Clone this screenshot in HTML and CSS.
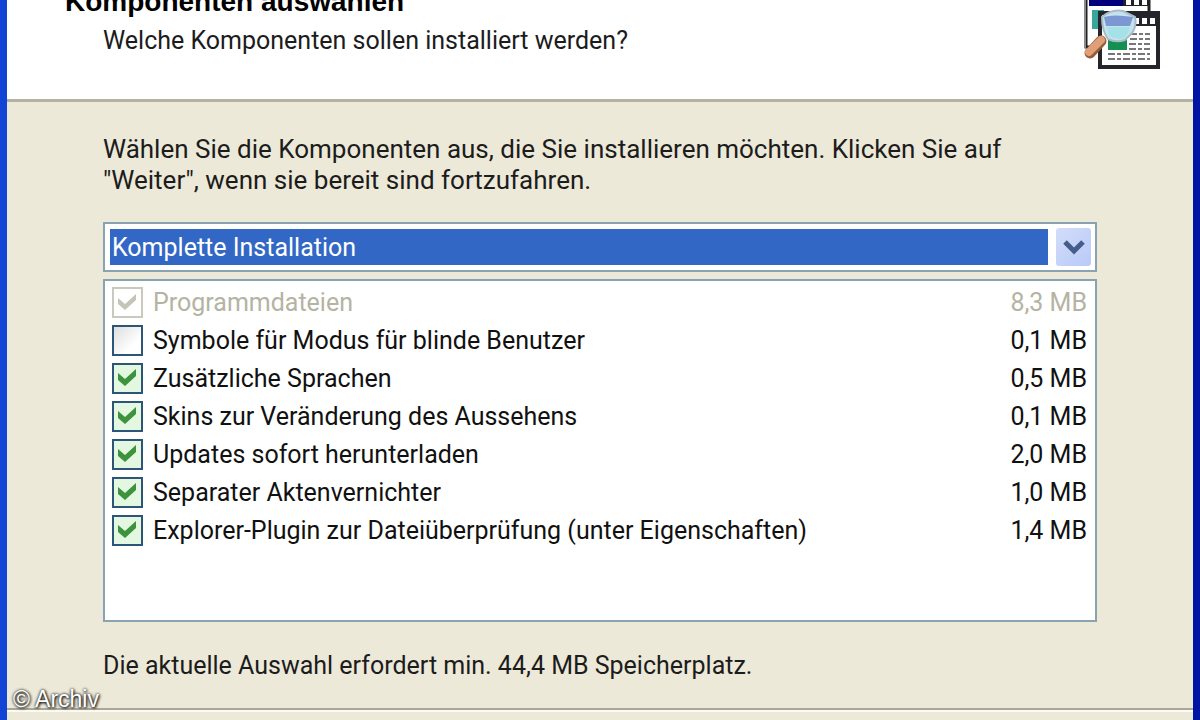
FILE: index.html
```html
<!DOCTYPE html>
<html lang="de">
<head>
<meta charset="utf-8">
<title>Komponenten auswählen</title>
<link rel="stylesheet" href="styles.css">
</head>
<body>
<main class="window">
  <header class="header">
    <div class="headings">
      <h1 class="title">Komponenten auswählen</h1>
      <p class="subtitle">Welche Komponenten sollen installiert werden?</p>
    </div>
    <svg class="logo" width="80" height="80" viewBox="0 0 80 80" aria-hidden="true">
      <path fill="#fff" stroke="#222" stroke-width="3" d="M6 0h63v56H6z"/>
      <path fill="#8a8a8a" d="M4 0h2v57H4z"/>
      <path fill="#00007c" d="M9 0h34v15H9z"/>
      <path fill="#222" d="M43 0h27v15H43z"/>
      <path fill="#fff" d="M46 9h5v5h-5zM54 9h5v5h-5zM62 9h5v5h-5z"/>
      <path fill="#39a69b" d="M12 19h12v19H12z"/>
      <path fill="#fff" stroke="#24242a" stroke-width="4" d="M20 22h58v54H20z"/>
      <path fill="#24242a" d="M50 22h26v13H50z"/>
      <path fill="#fff" d="M54 27h5v6h-5zM62 27h5v6h-5zM70 27h5v6h-5z"/>
      <path stroke="#777" stroke-width="2" stroke-dasharray="7 2 4 2" d="M50 43h20M50 48h20M49 53h21M49 58h21M28 63h42M28 68h42"/>
      <path fill="#139052" d="M28 48h19v11H28z"/>
      <path fill="#c6e2ed" stroke="#a7bdc8" stroke-width="2" d="M22 26q9-8 21-6l12 6q2 9-3 16l-7 7q-9 3-17-1-6-8-6-22z"/>
      <path fill="#7b98d2" d="M24 26q9-3 29 0l-3 9H26z"/>
      <path fill="#a5e2e7" d="M27 36h23q-1 7-6 11-9 2-15-2z"/>
      <path stroke="#965d3b" stroke-width="11" stroke-linecap="round" d="M21 50 10 62"/>
      <path stroke="#dfa077" stroke-width="8" stroke-linecap="round" d="M21 49 9 61"/>
    </svg>
  </header>

  <form class="content">
    <p class="intro">Wählen Sie die Komponenten aus, die Sie installieren möchten. Klicken Sie auf<br>"Weiter", wenn sie bereit sind fortzufahren.</p>
    <div class="combo">
      <select class="combo-select" aria-label="Installationsart">
        <option>Komplette Installation</option>
      </select>
      <span class="combo-arrow" aria-hidden="true">
        <svg width="24" height="18" viewBox="0 0 24 18"><path d="M3 4l9 9 9-9" fill="none" stroke="#465d8b" stroke-width="5"/></svg>
      </span>
    </div>
    <ul class="list">
      <li class="row disabled"><input class="check" type="checkbox" id="c1" checked disabled><label class="name" for="c1">Programmdateien</label><span>8,3 MB</span></li>
      <li class="row"><input class="check" type="checkbox" id="c2"><label class="name" for="c2">Symbole für Modus für blinde Benutzer</label><span>0,1 MB</span></li>
      <li class="row"><input class="check" type="checkbox" id="c3" checked><label class="name" for="c3">Zusätzliche Sprachen</label><span>0,5 MB</span></li>
      <li class="row"><input class="check" type="checkbox" id="c4" checked><label class="name" for="c4">Skins zur Veränderung des Aussehens</label><span>0,1 MB</span></li>
      <li class="row"><input class="check" type="checkbox" id="c5" checked><label class="name" for="c5">Updates sofort herunterladen</label><span>2,0 MB</span></li>
      <li class="row"><input class="check" type="checkbox" id="c6" checked><label class="name" for="c6">Separater Aktenvernichter</label><span>1,0 MB</span></li>
      <li class="row"><input class="check" type="checkbox" id="c7" checked><label class="name" for="c7">Explorer-Plugin zur Dateiüberprüfung (unter Eigenschaften)</label><span>1,4 MB</span></li>
    </ul>
    <p class="summary">Die aktuelle Auswahl erfordert min. 44,4 MB Speicherplatz.</p>
  </form>
  <footer class="footer"></footer>
  <span class="credit">© Archiv</span>
</main>
</body>
</html>
```
FILE: styles.css
```css
* {
  box-sizing: border-box;
}

body {
  margin: 0;
  font-family: Roboto, "Liberation Sans", sans-serif;
  font-size: 25px;
  line-height: 31px;
  color: #1c1c1c;
}

h1, p, ul {
  margin: 0;
  padding: 0;
}

.window {
  position: relative;
  display: flex;
  flex-direction: column;
  min-height: 100vh;
  overflow: hidden;
  background: #ece9d8;
  border-left: 7px solid #1245d6;
  border-right: 7px solid #0014a4;
}

.header {
  display: flex;
  justify-content: space-between;
  padding: 0 33px 28px 58px;
  background: #fff;
  border-bottom: 3px solid #b5b2a4;
}

.headings {
  margin-top: -14px;
}

.title {
  font-family: "Liberation Sans", Arial, sans-serif;
  font-size: 28px;
  line-height: 32px;
  color: #000;
}

.subtitle {
  padding: 7px 0 0 38px;
}

.logo {
  flex: none;
  margin: -9px 0 0;
}

.content {
  flex: 1;
  padding: 32px 96px 0;
}

.intro {
  font-size: 26px;
}

.combo {
  display: flex;
  gap: 7px;
  position: relative;
  margin-top: 26px;
  padding: 4px;
  background: #fff;
  border: 2px solid #8aa3b3;
}

.combo-select {
  flex: 1;
  height: 36px;
  margin: 1px;
  padding: 0 2px;
  appearance: none;
  border: 0;
  border-radius: 0;
  background: #3367c5;
  color: #fff;
  font: inherit;
}

.combo-arrow {
  display: flex;
  align-items: center;
  justify-content: center;
  width: 35px;
  border-radius: 3px;
  background: linear-gradient(135deg, #d3ddfb, #b8caf7);
}

.list {
  min-height: 343px;
  margin-top: 7px;
  padding: 2px 8px 2px 7px;
  list-style: none;
  background: #fff;
  border: 2px solid #8aa3b3;
}

.row {
  display: flex;
  align-items: center;
  gap: 10px;
  height: 38px;
  color: #111;
}

.disabled {
  color: #b5b3a3;
}

.name {
  flex: 1;
}

.check {
  flex: none;
  width: 31px;
  height: 31px;
  margin: 0;
  appearance: none;
  border: 2px solid #2d5577;
  background: linear-gradient(135deg, #dedede, #fff 70%);
}

.check:checked {
  background: #e4f7e0 url("data:image/svg+xml,%3Csvg xmlns='http://www.w3.org/2000/svg' viewBox='0 0 27 27'%3E%3Cpath fill='%233d923d' d='M4 8l7 6L22 4v7L11 21 4 15z'/%3E%3C/svg%3E") center / 100% no-repeat;
}

.check:disabled {
  border-color: #cac9bd;
  background: #fff url("data:image/svg+xml,%3Csvg xmlns='http://www.w3.org/2000/svg' viewBox='0 0 27 27'%3E%3Cpath fill='%23c5c4b9' d='M4 9l7 6L22 5v6L11 21 4 15z'/%3E%3C/svg%3E") center / 100% no-repeat;
}

.summary {
  margin-top: 28px;
}

.footer {
  height: 12px;
  border-top: 2px solid #aaa79a;
  box-shadow: inset 0 2px #fbfaf3;
}

.credit {
  position: absolute;
  left: 6px;
  bottom: 7px;
  font-family: "Liberation Sans", Arial, sans-serif;
  font-size: 23px;
  line-height: 28px;
  color: #fff;
  text-shadow: 0 0 3px #000, 1px 1px 3px #000;
}
```
